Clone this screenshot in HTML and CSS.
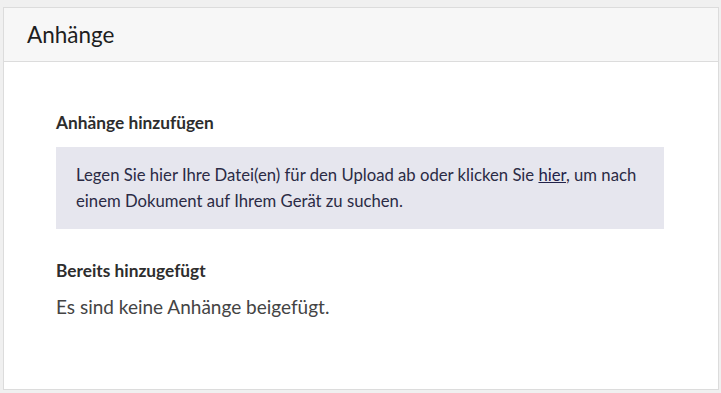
FILE: index.html
```html
<!DOCTYPE html>
<html lang="de">
<head>
  <meta charset="UTF-8" />
  <meta name="viewport" content="width=device-width, initial-scale=1" />
  <title>Anhänge</title>
  <link rel="stylesheet" href="styles.css">
</head>
<body>
  <div class="card">
    <div class="card-header">
      <h2>Anhänge</h2>
    </div>

    <div class="card-body">
      <h3 class="section-title">Anhänge hinzufügen</h3>
      <div class="dropzone">
        <p>Legen Sie hier Ihre Datei(en) für den Upload ab oder klicken Sie <a href="#">hier</a>, um nach
        einem Dokument auf Ihrem Gerät zu suchen.</p>
      </div>

      <h3 class="section-title">Bereits hinzugefügt</h3>
      <p class="empty">Es sind keine Anhänge beigefügt.</p>
    </div>
  </div>
</body>
</html>
```

FILE: styles.css
```css
body {
  margin: 0;
  padding: 7px 2px 0 3px;
  background-color: #f0f0f0;
  font-family: Lato, 'Noto Sans', sans-serif;
  color: #333;
}

.card {
  background-color: #fff;
  border: 1px solid #dcdcdc;
  height: 383px;
  box-sizing: border-box;
}

.card-header {
  background-color: #f7f7f7;
  border-bottom: 1px solid #dcdcdc;
  height: 53px;
  padding: 0 23px;
  display: flex;
  align-items: center;
}

.card-header h2 {
  margin: 0;
  font-size: 22.5px;
  font-weight: normal;
  color: #1e1e1e;
}

.card-body {
  padding: 49px 54px 0 52px;
}

.section-title {
  margin: 0 0 12px;
  font-size: 17.3px;
  font-weight: bold;
  color: #2d2d2d;
  line-height: 24px;
}

.dropzone {
  background-color: #e6e6ee;
  color: #2b2b45;
  padding: 15px 20px;
  margin-bottom: 30px;
}

.dropzone p {
  margin: 0;
  font-size: 16.7px;
  line-height: 26px;
}

.dropzone a {
  color: #22224a;
}

.empty {
  margin: 8px 0 0;
  font-size: 19px;
  line-height: 23px;
  color: #444;
}
```
